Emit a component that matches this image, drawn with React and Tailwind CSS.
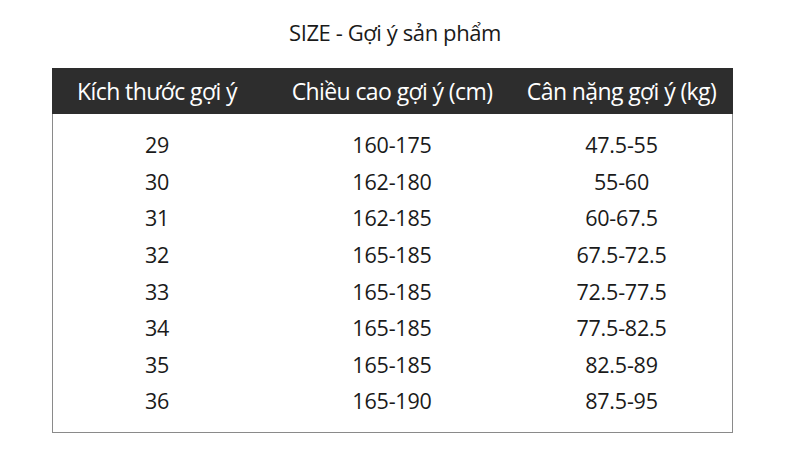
import React from 'react';

const rows = [
    ['29', '160-175', '47.5-55'],
    ['30', '162-180', '55-60'],
    ['31', '162-185', '60-67.5'],
    ['32', '165-185', '67.5-72.5'],
    ['33', '165-185', '72.5-77.5'],
    ['34', '165-185', '77.5-82.5'],
    ['35', '165-185', '82.5-89'],
    ['36', '165-190', '87.5-95'],
];

const App = () => {
    return (
        <div className="w-[790px] h-[476px] bg-white text-[#1a1a1a] font-['Open_Sans',sans-serif] overflow-hidden">
            <h1 className="text-[22px] text-center pt-[17px] h-[68px] leading-[30px] tracking-[-0.4px]">SIZE - Gợi ý sản phẩm</h1>
            <div className="ml-[52px] w-[681px] border border-[#8a8a8a] border-t-0">
                <div className="grid grid-cols-[208px_262px_1fr] bg-[#2d2d2d] text-white h-[46px] items-center text-[23px] tracking-[-0.6px] -mx-px px-px">
                    <div className="text-center">Kích thước gợi ý</div>
                    <div className="text-center">Chiều cao gợi ý (cm)</div>
                    <div className="text-center pr-3">Cân nặng gợi ý (kg)</div>
                </div>
                <div className="py-[12px] pt-[13px]">
                    {rows.map(r => (
                        <div key={r[0]} className="grid grid-cols-[208px_262px_1fr] h-[36.6px] items-center text-[21.5px] tracking-[-0.2px]">
                            <div className="text-center">{r[0]}</div>
                            <div className="text-center">{r[1]}</div>
                            <div className="text-center pr-3">{r[2]}</div>
                        </div>
                    ))}
                </div>
            </div>
        </div>
    );
};

export default App;
